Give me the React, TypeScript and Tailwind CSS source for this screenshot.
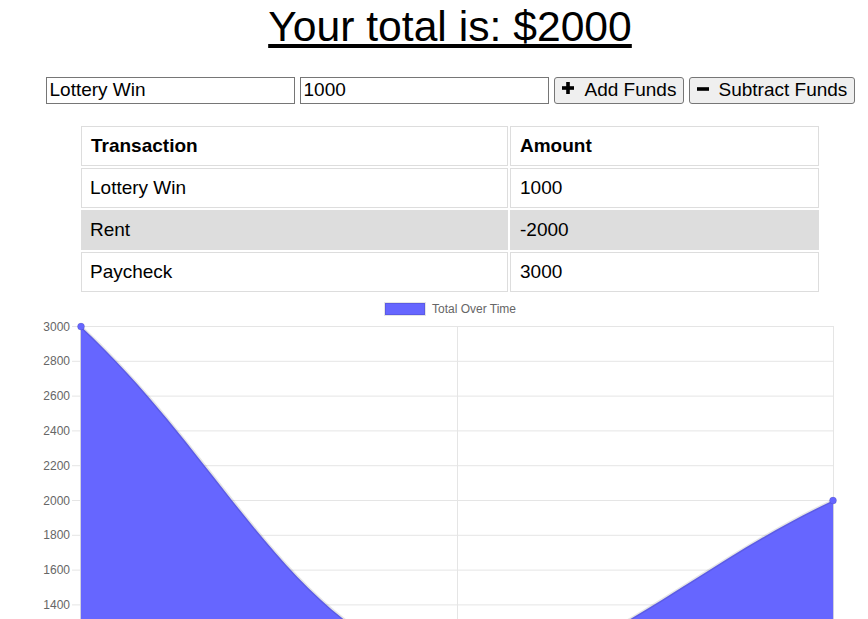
const transactions = [
  { name: "Lottery Win", amount: 1000 },
  { name: "Rent", amount: -2000 },
  { name: "Paycheck", amount: 3000 },
];

const ticks = [3000, 2800, 2600, 2400, 2200, 2000, 1800, 1600, 1400, 1200, 1000];
const yOf = (v: number) => 326.5 + (3000 - v) * 0.174;

function PlusIcon() {
  return (
    <svg width="12" height="12" viewBox="0 0 12 12" className="-translate-y-[3px]">
      <rect x="4.2" y="0" width="3.6" height="12" fill="#000" />
      <rect x="0" y="4.2" width="12" height="3.6" fill="#000" />
    </svg>
  );
}

function MinusIcon() {
  return (
    <svg width="12" height="12" viewBox="0 0 12 12" className="-translate-y-[2px]">
      <rect x="0" y="4.2" width="12" height="3.6" fill="#000" />
    </svg>
  );
}

function Chart() {
  const fill = "#6666ff";
  const edge = "rgba(0,0,0,0.1)";
  const curve = "M81,326.5 C231.4,466 290.6,636 457,674.5 C591.4,674.5 682.6,571 833,500.5";
  return (
    <svg width="900" height="323" className="block mt-[4px]">
      <g transform="translate(0,-296)" fontFamily="'Liberation Sans', Arial, sans-serif">
        {/* legend */}
        <rect x="385" y="303" width="40" height="12" fill={fill} stroke={edge} strokeWidth="2" />
        <text x="432" y="313" fontSize="12" fill="#666">
          Total Over Time
        </text>

        {/* grid */}
        {ticks.map((t) => (
          <g key={t}>
            <line x1="72" x2="833.5" y1={yOf(t)} y2={yOf(t)} stroke="#e5e5e5" strokeWidth="1" />
            {t >= 1400 && (
              <text x="70" y={yOf(t) + 4} fontSize="12" fill="#666" textAnchor="end">
                {t}
              </text>
            )}
          </g>
        ))}
        {[80.5, 457.5, 833.5].map((x) => (
          <line key={x} x1={x} x2={x} y1="326" y2="684" stroke="#e5e5e5" strokeWidth="1" />
        ))}

        {/* area */}
        <path d={`${curve} L833,674.5 L81,674.5 Z`} fill={fill} />
        <path d={curve} fill="none" stroke={edge} strokeWidth="3" />
        <line x1="80.5" x2="80.5" y1="326" y2="684" stroke="#cfcfdf" strokeWidth="1" />
        <line x1="833.5" x2="833.5" y1="500" y2="684" stroke="#cfcfdf" strokeWidth="1" />

        {[
          [81, 326.5],
          [457, 674.5],
          [833, 500.5],
        ].map(([x, y]) => (
          <circle key={x} cx={x} cy={y} r="3.5" fill={fill} stroke={edge} strokeWidth="1" />
        ))}
      </g>
    </svg>
  );
}

export default function App() {
  return (
    <div className="w-full h-[619px] overflow-hidden bg-white">
      <div className="w-[900px] font-['Liberation_Sans',Arial,sans-serif] text-black">
        <h1 className="pt-[2px] text-center text-[42.67px] leading-[49px] font-normal underline">
          Your total is: $2000
        </h1>

        <div className="mt-[26px] flex justify-center gap-[5px] h-[27px] text-[19px]">
          <input
            defaultValue="Lottery Win"
            className="w-[249px] h-[27px] border border-[#767676] px-[3px] text-[19px] outline-none"
          />
          <input
            defaultValue="1000"
            className="w-[249px] h-[27px] border border-[#767676] px-[3px] text-[19px] outline-none"
          />
          <button className="w-[130px] h-[27px] flex items-center gap-[11px] pl-[7px] bg-[#efefef] border border-[#767676] rounded-[3px]">
            <PlusIcon />
            <span>Add Funds</span>
          </button>
          <button className="w-[166px] h-[27px] flex items-center gap-[10px] pl-[7px] bg-[#efefef] border border-[#767676] rounded-[3px]">
            <MinusIcon />
            <span>Subtract Funds</span>
          </button>
        </div>

        <div className="mt-[22px] ml-[81px] grid grid-cols-[427px_309px] gap-[2px] text-[19px]">
          <div className="h-[40px] flex items-center pl-[9px] border border-[#dddddd] font-bold">Transaction</div>
          <div className="h-[40px] flex items-center pl-[9px] border border-[#dddddd] font-bold">Amount</div>
          {transactions.map((t, i) => {
            const bg = i === 1 ? "bg-[#dddddd]" : "bg-white";
            return [
              <div key={t.name + "n"} className={`h-[40px] flex items-center pl-[8px] border border-[#dddddd] ${bg}`}>
                {t.name}
              </div>,
              <div key={t.name + "a"} className={`h-[40px] flex items-center pl-[9px] border border-[#dddddd] ${bg}`}>
                {t.amount}
              </div>,
            ];
          })}
        </div>

        <Chart />
      </div>
    </div>
  );
}
